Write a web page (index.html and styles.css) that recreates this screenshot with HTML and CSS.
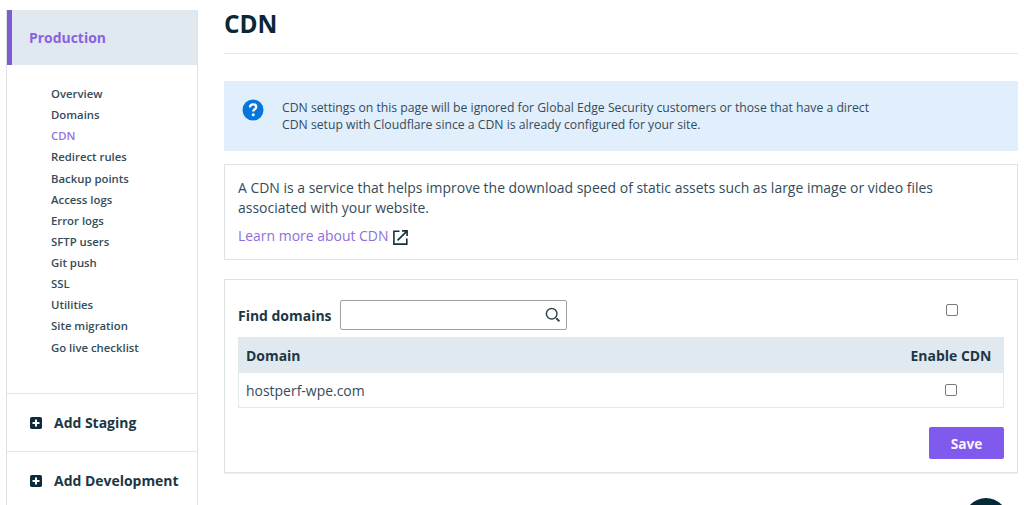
FILE: index.html
```html
<!DOCTYPE html>
<html lang="en">
<head>
    <meta charset="UTF-8">
    <meta name="viewport" content="width=device-width, initial-scale=1.0">
    <title>CDN</title>
    <link rel="stylesheet" href="styles.css">
</head>
<body>
    <div class="page">
        <nav class="sidebar">
            <a class="env">Production</a>
            <ul class="menu">
                <li>Overview</li>
                <li>Domains</li>
                <li class="active">CDN</li>
                <li>Redirect rules</li>
                <li>Backup points</li>
                <li>Access logs</li>
                <li>Error logs</li>
                <li>SFTP users</li>
                <li>Git push</li>
                <li>SSL</li>
                <li>Utilities</li>
                <li>Site migration</li>
                <li>Go live checklist</li>
            </ul>
            <a class="add-env">
                <svg width="12" height="12" viewBox="0 0 12 12"><rect width="12" height="12" rx="1.8" fill="#0d2b3a"/><path d="M6 2.5v7M2.5 6h7" stroke="#fff" stroke-width="2"/></svg>
                <span class="staging">Add Staging</span>
            </a>
            <a class="add-env">
                <svg width="12" height="12" viewBox="0 0 12 12"><rect width="12" height="12" rx="1.8" fill="#0d2b3a"/><path d="M6 2.5v7M2.5 6h7" stroke="#fff" stroke-width="2"/></svg>
                <span class="development">Add Development</span>
            </a>
        </nav>
        <main class="content">
            <h1><span>CDN</span></h1>
            <div class="notice">
                <svg width="22" height="22" viewBox="0 0 22 22"><circle cx="11" cy="11" r="10.5" fill="#0675dc"/><path d="M7.9 8.3c.2-2 1.4-3 3.2-3 1.9 0 3.1 1 3.1 2.6 0 2.4-3 2.3-3 4.7" fill="none" stroke="#fff" stroke-width="2.3"/><circle cx="11.2" cy="15.8" r="1.5" fill="#fff"/></svg>
                <p><span>CDN settings on this page will be ignored for Global Edge Security customers or those that have a direct</span><br><span>CDN setup with Cloudflare since a CDN is already configured for your site.</span></p>
            </div>
            <div class="card about">
                <p><span>A CDN is a service that helps improve the download speed of static assets such as large image or video files</span><br><span>associated with your website.</span></p>
                <a class="learn"><span>Learn more about CDN</span>
                    <svg width="15" height="15" viewBox="0 0 15 15" fill="none" stroke="#16303c" stroke-width="1.6"><path d="M6.5 1.2H.9v12.9h12.9V8.5M9 .9h5.1V6M13.9 1.1L4.6 10.4"/></svg>
                </a>
            </div>
            <div class="card domains">
                <div class="toolbar">
                    <label for="find">Find domains</label>
                    <div class="search">
                        <input type="text" id="find">
                        <svg width="16" height="16" viewBox="0 0 16 16" fill="none" stroke="#334850" stroke-width="1.5"><circle cx="6.7" cy="6.7" r="5.3"/><path d="M11.3 11.3l3.1 3.1" stroke-width="2"/></svg>
                    </div>
                    <input type="checkbox" class="check-all">
                </div>
                <table>
                    <thead>
                        <tr><th><span>Domain</span></th><th class="enable"><span>Enable CDN</span></th></tr>
                    </thead>
                    <tbody>
                        <tr><td><span>hostperf-wpe.com</span></td><td class="enable"><input type="checkbox"></td></tr>
                    </tbody>
                </table>
                <button class="save">Save</button>
            </div>
        </main>
    </div>
    <div class="help"></div>
</body>
</html>
```
FILE: styles.css
```css
* {
    box-sizing: border-box;
}
body {
    margin: 0;
    height: 505px;
    overflow: hidden;
    background-color: #fff;
    color: #344c59;
    font-family: "Open Sans", sans-serif;
    font-size: 13.96px;
}
p, h1, ul {
    margin: 0;
    padding: 0;
}
svg {
    display: block;
    flex-shrink: 0;
}
.page {
    display: flex;
    gap: 26px;
    padding: 10px 6px 0;
}
.sidebar {
    width: 192px;
    height: 510px;
    flex-shrink: 0;
    border: 1px solid #dfe2e4;
    border-top: none;
}
.env {
    display: flex;
    align-items: center;
    height: 55px;
    padding-left: 17px;
    border-left: 5px solid #7e5cd6;
    background-color: #e1e9f0;
    color: #8763e0;
    font-weight: 700;
    font-size: 13.95px;
}
.menu {
    list-style: none;
    height: 328px;
    padding: 18px 0 0 44px;
    font-size: 11.35px;
    font-weight: 600;
    line-height: 21.13px;
}
.menu .active {
    color: #9273e4;
}
.add-env {
    display: flex;
    align-items: center;
    gap: 12px;
    height: 58px;
    padding: 0 0 0 23px;
    border-top: 1px solid #e3e7e9;
    color: #1d3645;
    font-weight: 700;
}
.content {
    width: 794px;
}
.content h1 {
    height: 44px;
    border-bottom: 1px solid #e6e8e9;
    color: #0b2735;
    font-size: 24.4px;
    line-height: 28px;
}
.notice {
    display: flex;
    gap: 18px;
    height: 70px;
    margin: 27px 0 13px;
    padding: 18px 18px 0;
    background-color: #e1eefb;
    font-size: 12.21px;
    line-height: 17px;
}
.card {
    border: 1px solid #dfe2e3;
    padding: 0 13px;
}
.about {
    height: 96px;
    padding-top: 13px;
    line-height: 19.5px;
}
.learn {
    display: flex;
    align-items: center;
    gap: 4px;
    margin-top: 9px;
    color: #8e6edb;
}
.learn svg {
    margin-top: 3px;
}
.domains {
    display: flex;
    flex-direction: column;
    height: 194px;
    margin-top: 19px;
    box-shadow: 0 1px 0 #f0f1f2;
}
.toolbar {
    display: flex;
    align-items: center;
    height: 30px;
    margin-top: 20px;
}
.toolbar label {
    width: 102px;
    color: #1d3645;
    font-weight: 700;
}
.search {
    display: flex;
    align-items: center;
    width: 227px;
    height: 30px;
    padding-right: 5px;
    border: 1px solid #9ba1a4;
    border-radius: 2px;
}
.search input {
    flex: 1;
    min-width: 0;
    border: none;
    outline: none;
    background: none;
}
input[type="checkbox"] {
    appearance: none;
    display: block;
    width: 12px;
    height: 12px;
    margin: 0;
    border: 1px solid #777b7e;
    border-radius: 2px;
    background-color: #fff;
}
.toolbar .check-all {
    margin: 0 46px 11px auto;
}
table {
    width: 766px;
    margin-top: 7px;
    border: 1px solid #e1e9ee;
    border-top: none;
    border-collapse: separate;
    border-spacing: 0;
}
th, td {
    padding: 0 7px;
    text-align: left;
}
th {
    height: 36px;
    background-color: #e1e9f0;
    color: #1d3645;
}
td {
    height: 34px;
}
.enable {
    width: 104px;
    padding: 0;
    text-align: center;
}
td.enable input {
    margin: 0 auto;
}
.save {
    align-self: flex-end;
    width: 75px;
    height: 32px;
    margin-top: 19px;
    border: none;
    border-radius: 2px;
    background-color: #805aec;
    color: #f8f5ff;
    font-family: inherit;
    font-size: 13.7px;
    font-weight: 700;
}
/* chat bubble, sits partly below the fold */
.help {
    position: absolute;
    top: 498px;
    left: 964px;
    width: 44px;
    height: 7px;
    overflow: hidden;
}
.help::before {
    content: "";
    display: block;
    height: 44px;
    border-radius: 50%;
    background-color: #06293a;
}
```
